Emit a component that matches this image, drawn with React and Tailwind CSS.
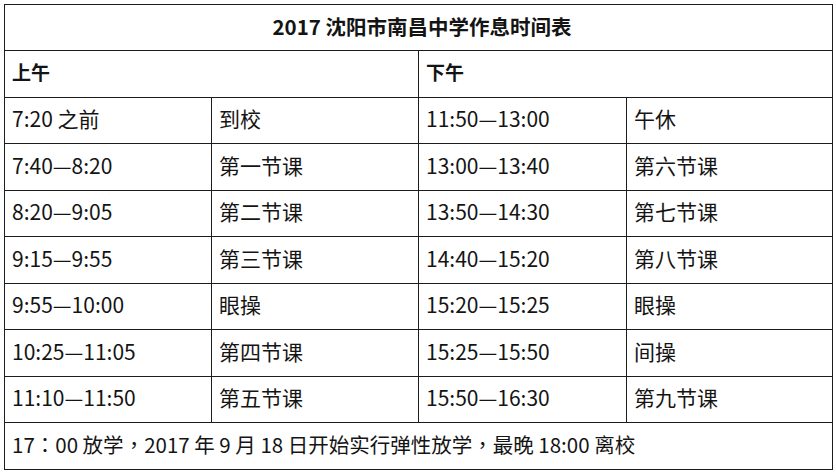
import React from 'react';

const rows = [
  ['7:20 之前', '到校', '11:50—13:00', '午休'],
  ['7:40—8:20', '第一节课', '13:00—13:40', '第六节课'],
  ['8:20—9:05', '第二节课', '13:50—14:30', '第七节课'],
  ['9:15—9:55', '第三节课', '14:40—15:20', '第八节课'],
  ['9:55—10:00', '眼操', '15:20—15:25', '眼操'],
  ['10:25—11:05', '第四节课', '15:25—15:50', '间操'],
  ['11:10—11:50', '第五节课', '15:50—16:30', '第九节课'],
];

// row heights alternate so the lines land on the same pixels as the scan
const heights = ['h-[46px]', 'h-[47px]'];
const cols = 'grid grid-cols-[207px_207px_208px_206px]';
const cell = 'flex items-center border-r border-b border-[#1c1c1c] pl-[7px] pb-[3px] min-w-0 whitespace-nowrap';

function Punct({ children }) {
  return <span className="font-['Noto_Sans_CJK_TC',sans-serif]">{children}</span>;
}

export default function App() {
  return (
    <div className="min-h-screen bg-white pt-[4px] pl-[4px] text-[#141414] font-['Noto_Sans_CJK_SC',sans-serif]">
      <div className="w-[829px] border-l border-t border-[#1c1c1c]">
        <div className={`${cols} h-[46px]`}>
          <div className={`${cell} col-span-4 justify-center pl-0 text-[20.5px] font-bold`}>
            2017 沈阳市南昌中学作息时间表
          </div>
        </div>

        <div className={`${cols} h-[47px]`}>
          <div className={`${cell} col-span-2 text-[19px] font-bold`}>上午</div>
          <div className={`${cell} col-span-2 text-[19px] font-bold`}>下午</div>
        </div>

        {rows.map((row, i) => (
          <div key={i} className={`${cols} ${heights[i % 2]}`}>
            {row.map((text, j) => (
              <div key={j} className={`${cell} text-[21px]`}>
                {text}
              </div>
            ))}
          </div>
        ))}

        <div className={`${cols} h-[47px]`}>
          <div className={`${cell} col-span-4 text-[20.5px]`}>
            17<Punct>：</Punct>00 放学<Punct>，</Punct>2017 年 9 月 18 日开始实行弹性放学<Punct>，</Punct>最晚 18:00 离校
          </div>
        </div>
      </div>
    </div>
  );
}
